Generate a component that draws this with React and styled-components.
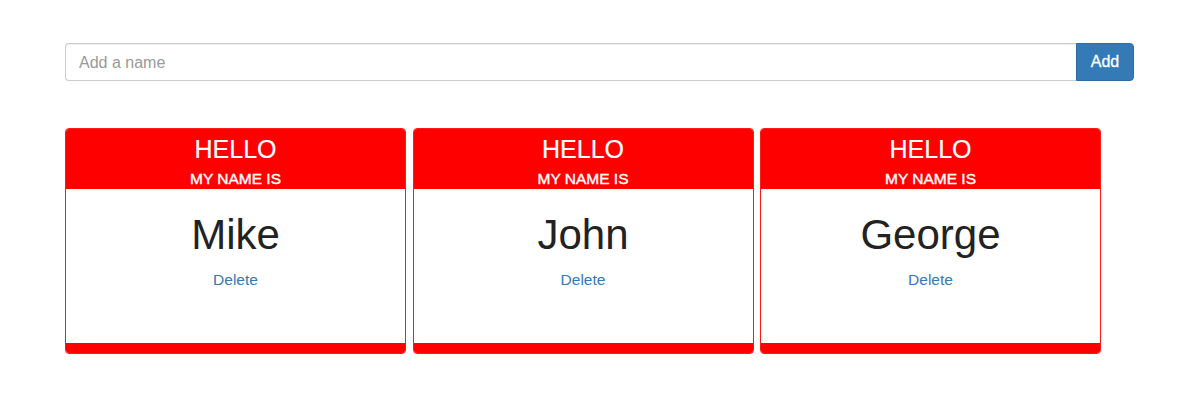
import React, { useState } from 'react'
import styled, { createGlobalStyle } from 'styled-components'

const GlobalStyle = createGlobalStyle`
	body {
		margin: 0;
		background: #fff;
		font-family: "Liberation Sans", Arial, sans-serif;
		color: #333;
	}
`

const Page = styled.div`
	width: 1069px;
	padding: 43px 0 0 65px;
`

const Form = styled.form`
	display: flex;
	height: 38px;
	margin-bottom: 47px;
`

const NameInput = styled.input`
	flex: 1;
	box-sizing: border-box;
	height: 38px;
	padding: 1px 13px 0;
	border: 1px solid #ccc;
	border-right: none;
	border-radius: 4px 0 0 4px;
	box-shadow: inset 0 1px 1px rgba(0, 0, 0, 0.075);
	font-family: inherit;
	font-size: 16px;
	color: #555;
	outline: none;
	&::placeholder {
		color: #999;
	}
`

const AddButton = styled.button`
	box-sizing: border-box;
	width: 58px;
	height: 38px;
	border: 1px solid #2e6da4;
	border-radius: 0 4px 4px 0;
	background: #337ab7;
	color: #fff;
	font-family: inherit;
	font-size: 16px;
	-webkit-text-stroke: 0.3px #fff;
	cursor: pointer;
`

const Cards = styled.div`
	display: flex;
	gap: 6.5px;
`

const Card = styled.div`
	box-sizing: border-box;
	width: 341px;
	height: 226px;
	display: flex;
	flex-direction: column;
	border: 1px solid #ff1a1a;
	border-radius: 4px;
	background: #fff;
	overflow: hidden;
`

const Header = styled.div`
	background: #ff0000;
	color: #fff;
	text-align: center;
	padding-top: 4.5px;
	height: 60px;
	box-sizing: border-box;
`

const Hello = styled.div`
	font-size: 25px;
	line-height: 30px;
	-webkit-text-stroke: 0.2px #fff;
`

const MyNameIs = styled.div`
	margin-top: 5px;
	font-size: 15.5px;
	line-height: 20px;
	-webkit-text-stroke: 0.4px #fff;
`

const Body = styled.div`
	flex: 1;
	text-align: center;
	padding-top: 22.5px;
`

const Name = styled.div`
	font-size: 42px;
	line-height: 46px;
	color: #222;
`

const DeleteLink = styled.a`
	display: inline-block;
	margin-top: 11px;
	font-size: 15.5px;
	line-height: 22px;
	color: #337ab7;
	text-decoration: none;
	cursor: pointer;
`

const Footer = styled.div`
	height: 10px;
	background: #ff0000;
`

export default function App() {
	const [names, setNames] = useState(['Mike', 'John', 'George'])
	const [value, setValue] = useState('')

	const add = e => {
		e.preventDefault()
		if (!value.trim()) return
		setNames([...names, value.trim()])
		setValue('')
	}

	return (
		<>
			<GlobalStyle />
			<Page>
				<Form onSubmit={add}>
					<NameInput
						placeholder="Add a name"
						value={value}
						onChange={e => setValue(e.target.value)}
					/>
					<AddButton type="submit">Add</AddButton>
				</Form>
				<Cards>
					{names.map((n, i) => (
						<Card key={i}>
							<Header>
								<Hello>HELLO</Hello>
								<MyNameIs>MY NAME IS</MyNameIs>
							</Header>
							<Body>
								<Name>{n}</Name>
								<DeleteLink onClick={() => setNames(names.filter((_, j) => j !== i))}>
									Delete
								</DeleteLink>
							</Body>
							<Footer />
						</Card>
					))}
				</Cards>
			</Page>
		</>
	)
}
